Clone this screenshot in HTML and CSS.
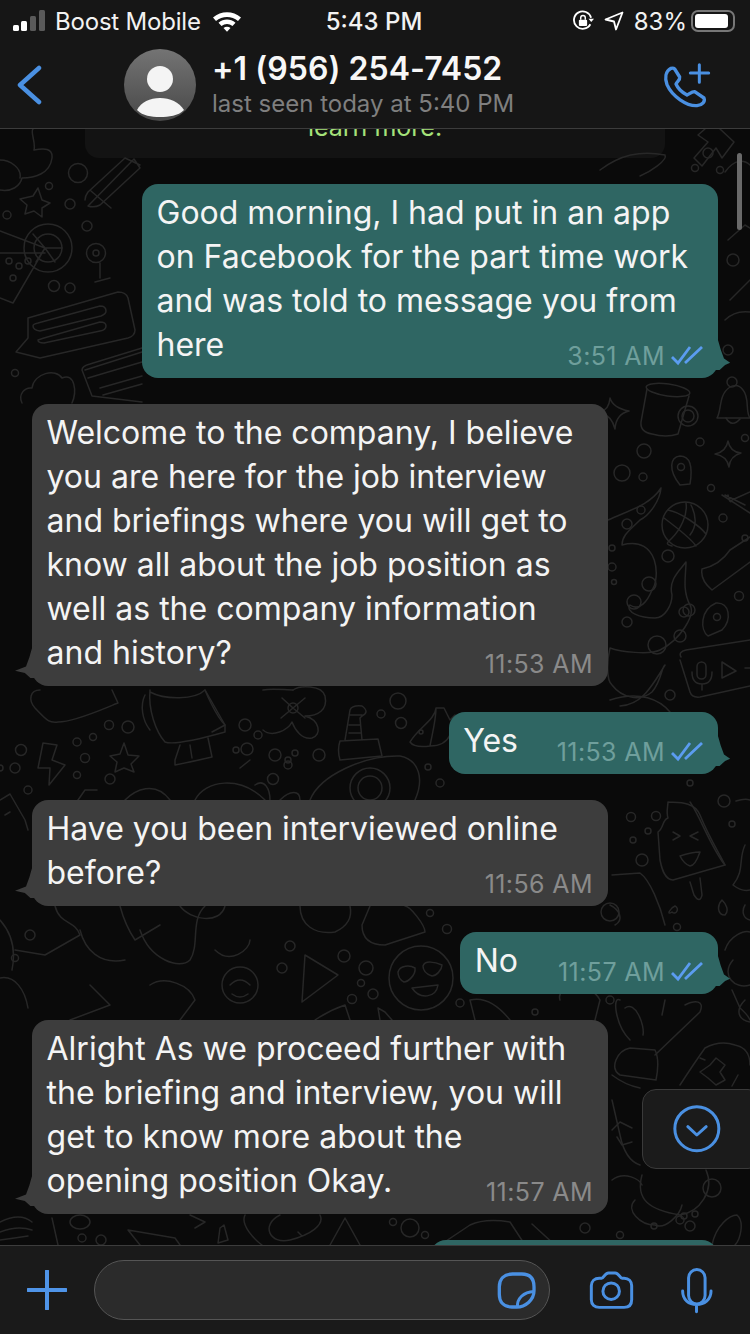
FILE: index.html
```html
<!DOCTYPE html>
<html lang="en">
<head>
<meta charset="utf-8">
<title>Chat</title>
<link rel="stylesheet" href="styles.css">
</head>
<body>
<div class="app">
  <header class="top">
    <div class="status">
      <div class="status-left">
        <svg class="signal" viewBox="0 0 34 22" width="34" height="22"><rect x="0" y="15" width="6" height="6" rx="1.5" fill="#fff"/><rect x="8" y="11" width="6" height="10" rx="1.5" fill="#fff"/><rect x="17" y="6" width="6" height="15" rx="1.5" fill="#5a5a5a"/><rect x="26" y="0" width="6" height="21" rx="1.5" fill="#5a5a5a"/></svg>
        <span class="carrier">Boost Mobile</span>
        <svg class="wifi" viewBox="0 0 30 22" width="30" height="22"><path d="M1 7.5C9 .5 21 .5 29 7.5L26 11C19.800 5.500 10.200 5.500 4 11Z" fill="#fff"/><path d="M6.500 12.800C11.500 8.500 18.500 8.500 23.500 12.800L20.500 16C17 13.300 13 13.300 9.500 16Z" fill="#fff"/><path d="M11.500 18C13.500 16.400 16.500 16.400 18.500 18L15 21.800Z" fill="#fff"/></svg>
      </div>
      <div class="clock">5:43 PM</div>
      <div class="status-right">
        <svg class="lock" viewBox="0 0 24 24" width="22" height="22"><path d="M20 15.500A9.500 9.500 0 1 1 20.800 8.500" fill="none" stroke="#fff" stroke-width="2"/><path d="M18 9.500h6l-3 3.500z" fill="#fff"/><rect x="7.500" y="10.500" width="9" height="7" rx="1.200" fill="#fff"/><path d="M9.500 10.500V8.500a2.500 2.500 0 0 1 5 0v2" fill="none" stroke="#fff" stroke-width="1.600"/></svg>
        <svg class="loc" viewBox="0 0 20 20" width="20" height="20"><path d="M18.500 1.500L1.500 8.500L10 10.500L12 18.500Z" fill="none" stroke="#fff" stroke-width="1.800" stroke-linejoin="round"/></svg>
        <span class="pct">83%</span>
        <span class="battery"><span class="battery-fill"></span></span>
      </div>
    </div>
    <div class="nav">
      <svg class="back" viewBox="0 0 26 40" width="26" height="40"><path d="M22 3L3 20L22 37" fill="none" stroke="#4a90e2" stroke-width="4.500" stroke-linecap="round" stroke-linejoin="round"/></svg>
      <div class="avatar">
        <svg viewBox="0 0 72 72" width="72" height="72"><circle cx="36" cy="30" r="13" fill="#f4f4f4"/><path d="M13 61C17 53 26 49 36 49S55 53 60 61C54 67 45 68 36 68S19 67 13 61Z" fill="#f4f4f4"/></svg>
      </div>
      <div class="who">
        <div class="name">+1 (956) 254-7452</div>
        <div class="seen">last seen today at 5:40 PM</div>
      </div>
      <svg class="call" viewBox="870 180 150 135" width="50" height="45"><path d="M897 196C880 205 878 225 885 245C900 280 945 310 975 308C992 306 1000 295 996 285L968 266C960 265 950 275 945 276C930 268 917 255 912 243C915 235 925 232 923 222L908 198C905 195 900 195 897 196Z" fill="none" stroke="#4a90e2" stroke-width="10" stroke-linejoin="round"/><path d="M982 185V238M955 210H1010" fill="none" stroke="#4a90e2" stroke-width="9" stroke-linecap="round"/></svg>
    </div>
  </header>

  <main class="chat">
    <svg class="doodles" viewBox="0 129 750 1116" width="750" height="1116" aria-hidden="true">
      <g fill="none" stroke="#272727" stroke-width="1.500" stroke-linejoin="round" stroke-linecap="round">
        <!-- top-left -->
        <path d="M0 190C12 192 20 186 22 178C34 178 50 174 52 158C53 148 44 148 34 150C36 142 30 132 33 129"/>
        <path d="M0 160C10 160 22 168 20 178"/>
        <path d="M33 196L38 188L42 200L50 203L42 208L42 217L34 211L25 214L27 205L20 199Z"/>
        <circle cx="78" cy="173" r="9.500"/><circle cx="70" cy="204" r="5"/><circle cx="7" cy="215" r="4"/><circle cx="87" cy="226" r="5"/><circle cx="49" cy="186" r="3.500"/>
        <path d="M88 206L134 159L140 168L100 205Q94 208 88 206ZM91 191L111 208M85 200Q85 196 88 192L125 158L140 165"/>
        <circle cx="48" cy="248" r="24"/><circle cx="48" cy="248" r="14"/>
        <path d="M0 231L45 248L13 303L0 298M0 253L45 253M45 248L62 248M45 248L33 234M45 248L55 262M45 248L36 262"/>
        <circle cx="9" cy="261" r="3"/><circle cx="19" cy="266" r="3"/><circle cx="28" cy="261" r="3"/><circle cx="13" cy="278" r="3"/>
        <circle cx="96" cy="253" r="9.500"/><circle cx="96" cy="253" r="3"/><path d="M100 263V278M95 282L110 278"/>
        <circle cx="54" cy="286" r="5.500"/><circle cx="70" cy="288" r="5"/>
        <path d="M28 318L118 292Q126 292 128 298L135 330Q135 336 128 338L40 358L16 352L28 338Z"/>
        <path d="M38 323L100 306Q106 306 106 311Q106 314 101 316L40 331Q33 330 33 326Q33 324 38 323ZM44 338L100 322Q106 322 106 326Q106 330 100 331L44 343Q38 343 38 340Z"/>
        <path d="M85 370L142 352M88 378L142 362M100 388L142 376M103 395L142 384"/>
        <path d="M82 370Q82 366 90 364L142 348M82 370L92 396L142 402"/>
        <circle cx="15" cy="373" r="3.500"/>
        <path d="M22 403C18 395 24 387 32 388C34 373 56 368 62 378C75 372 77 392 72 403"/>
        <!-- top-right -->
        <path d="M720 129L734 142L722 158L716 148L702 166L694 158L708 142L698 135L705 129"/>
        <circle cx="708" cy="153" r="5"/><circle cx="695" cy="168" r="3.500"/><circle cx="720" cy="170" r="3.500"/>
        <path d="M600 170C620 155 640 150 665 155C668 160 650 172 640 176"/>
        <path d="M725 172C735 158 745 160 750 165"/>
        <path d="M728 240L745 225L750 228M730 300L750 280M725 320Q735 310 750 312"/>
        <circle cx="733" cy="260" r="6"/><circle cx="728" cy="350" r="5"/>
        <!-- right column -->
        <ellipse cx="668" cy="390" rx="22" ry="6" transform="rotate(8 668 390)"/>
        <path d="M647 389L641 422Q640 432 652 434Q666 438 678 434L689 396"/>
        <circle cx="688" cy="416" r="10"/><circle cx="688" cy="416" r="6"/>
        <path d="M717 418C722 410 718 395 730 387Q738 383 743 390C750 398 745 412 750 418Z"/>
        <circle cx="732" cy="382" r="5"/><path d="M726 418Q732 428 740 419"/>
        <path d="M728 441Q730 452 741 453Q730 456 729 467Q727 456 715 454Q726 452 728 441Z"/>
        <path d="M610 398Q613 408 629 411Q616 414 615 429Q612 416 600 412Q609 410 610 398Z"/>
        <circle cx="644" cy="451" r="7"/><circle cx="622" cy="473" r="8"/><circle cx="643" cy="477" r="4"/><circle cx="700" cy="442" r="4"/><circle cx="711" cy="488" r="3.500"/><circle cx="723" cy="518" r="4"/><circle cx="668" cy="556" r="6"/><circle cx="739" cy="596" r="4.500"/><circle cx="745" cy="438" r="3.500"/><circle cx="670" cy="695" r="5"/>
        <path d="M680 485C668 470 670 457 680 456C690 456 693 466 690 484Z"/><circle cx="681" cy="467" r="3.500"/>
        <circle cx="685" cy="525" r="23"/>
        <path d="M664 518C680 530 692 540 696 546M668 510C680 512 700 526 706 534M686 503C688 515 680 530 672 538C668 542 664 544 672 546M691 505C696 515 698 525 690 535"/>
        <path d="M608 520C630 510 650 505 661 488C660 500 650 515 640 520C630 530 622 535 622 545C660 535 660 580 652 590C648 600 640 612 630 605C625 612 640 618 655 618C665 618 672 605 672 595C668 580 680 570 686 562C686 575 682 590 690 605C696 615 680 640 660 650C650 655 620 652 610 648C607 660 606 680 612 685C622 698 640 702 652 692C662 680 662 665 665 665C650 690 640 705 620 706"/>
        <circle cx="627" cy="524" r="5"/><circle cx="641" cy="510" r="4"/><circle cx="649" cy="584" r="7"/><circle cx="634" cy="602" r="7"/><circle cx="627" cy="622" r="5"/><circle cx="684" cy="612" r="5"/><circle cx="689" cy="610" r="6"/><circle cx="680" cy="636" r="6"/><circle cx="657" cy="645" r="9"/><circle cx="612" cy="548" r="3"/><circle cx="612" cy="567" r="4"/><circle cx="614" cy="582" r="2.500"/>
        <path d="M722 495L750 513M725 495L745 505M750 492L732 500Q730 505 728 495M702 569Q720 565 730 550L750 537M702 569Q700 580 712 590L750 562"/><circle cx="745" cy="538" r="3"/>
        <path d="M708 636C700 630 700 610 716 603C730 602 732 620 722 630Z"/><circle cx="717" cy="617" r="3.500"/>
        <path d="M681 657Q678 652 686 650L750 640M680 660L690 692Q692 698 700 697L750 686"/>
        <rect x="697" y="662" width="9" height="17" rx="4.500"/><path d="M692 672Q692 684 702 684Q712 684 712 672M702 684V690"/>
        <path d="M722 662L736 671L722 678Z"/><path d="M745 668H750"/>
        <!-- ice lolly -->
        <path d="M668 802C675 803 694 800 700 815C708 835 720 855 725 865C708 870 680 878 673 880C665 880 662 870 660 860L658 832C664 828 662 820 668 818C666 812 668 806 668 802Z"/>
        <path d="M690 802C698 812 712 850 725 865"/>
        <path d="M673 840L680 836L673 832M698 832L690 836L698 840M680 856Q692 852 700 852Q695 866 690 866Q684 864 680 856Z"/>
        <path d="M690 882L694 895Q700 904 702 895L700 878"/>
        <path d="M675 906C670 908 666 916 672 912C676 916 680 908 675 906ZM722 900C717 905 717 915 725 915C730 910 725 903 722 900ZM745 905C742 910 742 918 750 920"/>
        <circle cx="631" cy="817" r="4.500"/><circle cx="656" cy="816" r="4.500"/><circle cx="648" cy="831" r="3"/><circle cx="633" cy="840" r="3"/><circle cx="642" cy="860" r="6"/><circle cx="724" cy="801" r="6"/><circle cx="690" cy="783" r="3"/><circle cx="732" cy="824" r="3"/>
        <path d="M736 801Q745 798 750 800M745 845C738 860 745 870 733 885Q742 892 750 890"/>
        <path d="M612 875L640 873C650 880 660 905 665 925M610 905C620 910 624 920 615 925"/>
        <circle cx="610" cy="912" r="9"/><circle cx="677" cy="927" r="3.500"/>
        <path d="M725 950C730 935 745 930 750 932M733 960C720 975 735 990 750 985"/>
        <path d="M732 990L740 1008Q748 1015 750 1020M745 1000C735 1010 738 1020 750 1022"/>
        <path d="M620 1000C612 995 615 1025 630 1040M616 1060Q620 1050 630 1048L655 1050Q660 1060 656 1080L620 1075Q612 1070 616 1060Z"/>
        <path d="M625 1008C635 1000 645 1025 643 1035M665 1000L662 1015M685 1005C695 1000 705 1000 700 1012L655 1055"/>
        <path d="M705 1048Q720 1040 735 1045Q750 1048 750 1065M680 1085Q695 1062 705 1048"/>
        <path d="M700 1058L705 1060M710 1065L716 1058L725 1065L720 1072L725 1080L716 1085L708 1078L700 1072Z"/>
        <path d="M738 1075L732 1086"/>
        <!-- lower right -->
        <path d="M612 1075Q625 1085 640 1088M612 1100L620 1135Q625 1160 640 1165M612 1180C625 1170 640 1180 642 1185M635 1200C625 1210 640 1225 655 1225C665 1230 680 1215 682 1205"/>
        <path d="M642 1175C635 1200 650 1210 680 1215C700 1212 715 1190 706 1170"/>
        <circle cx="712" cy="1188" r="9"/><circle cx="680" cy="1220" r="4"/><circle cx="690" cy="1226" r="5"/><circle cx="684" cy="1216" r="3"/><circle cx="654" cy="1226" r="3"/><circle cx="695" cy="1214" r="3"/>
        <path d="M712 1245C716 1225 730 1215 737 1215C745 1222 740 1240 735 1245"/>
        <path d="M612 1130L620 1122L632 1128M617 1137L622 1145L632 1142"/>
        <path d="M532 1224L555 1245M440 1245L470 1225Q485 1218 510 1222L525 1245"/>
        <circle cx="410" cy="1228" r="9"/><circle cx="425" cy="1235" r="3.500"/><circle cx="393" cy="1222" r="3.500"/><circle cx="585" cy="1228" r="5"/><circle cx="620" cy="1235" r="3.500"/>
        <!-- bottom strip left -->
        <path d="M0 1222Q20 1212 32 1222M0 1232Q18 1225 32 1230M0 1240Q15 1238 28 1236M52 1218L58 1245"/>
        <ellipse cx="80" cy="1222" rx="10" ry="7"/><circle cx="82" cy="1238" r="4"/><circle cx="101" cy="1240" r="5"/>
        <path d="M128 1230L175 1238L180 1245M128 1230L140 1245M190 1215L205 1222L195 1228M220 1228L218 1243L228 1240L224 1225ZM245 1215C240 1225 255 1240 262 1245M280 1215C260 1225 270 1245 290 1240C310 1235 325 1225 320 1215M298 1232L302 1236M330 1245L345 1218L360 1245"/>
        <!-- flower, periscope, middle row -->
        <circle cx="293" cy="708" r="5"/><path d="M293 690C300 685 322 685 325 696C328 710 318 716 305 716C320 720 322 735 312 738C302 740 295 730 292 722C288 730 272 738 263 730M293 708L305 698M293 708L282 698M293 708L305 718M293 708L281 718"/>
        <path d="M263 690C272 688 285 690 293 690"/>
        <circle cx="245" cy="725" r="6"/><circle cx="258" cy="735" r="4"/>
        <circle cx="295" cy="753" r="3"/>
        <circle cx="319" cy="755" r="6"/><circle cx="288" cy="760" r="3"/>
        <path d="M345 740L350 710Q352 705 362 706Q370 712 362 716L360 718L362 740M350 715L362 715M349 725L360 725M349 733L361 733M340 741L378 739L382 756L340 760Q337 750 340 741Z"/>
        <path d="M310 800C320 775 365 755 400 756C420 760 424 780 415 800"/>
        <circle cx="370" cy="788" r="20"/><circle cx="370" cy="788" r="12"/>
        <circle cx="398" cy="701" r="8"/><circle cx="381" cy="714" r="4"/><circle cx="401" cy="723" r="5.500"/><circle cx="428" cy="767" r="3"/><circle cx="440" cy="783" r="4"/>
        <path d="M410 742C418 728 435 720 436 708L444 708L450 720L455 715M410 742Q414 748 430 746Q445 746 450 735M436 708C436 720 432 735 430 746"/><circle cx="421" cy="732" r="2"/>
        <path d="M280 800C290 790 300 790 300 800M255 785C265 778 270 790 270 800M240 768L250 760"/>
        <!-- robot area -->
        <path d="M40 690C30 690 28 700 35 708C48 722 50 723 58 722C75 722 105 708 118 703L112 690"/>
        <path d="M150 690C148 710 156 732 165 742Q175 746 225 732L225 725C215 715 205 690 205 690M150 692C165 700 195 700 205 690"/>
        <path d="M145 695C140 705 142 720 150 730"/>
        <path d="M180 745L175 760L175 765Q190 762 212 757L208 738M190 745L192 758"/>
        <path d="M205 690L225 725L212 732"/>
        <circle cx="109" cy="725" r="4.500"/><circle cx="128" cy="727" r="6"/><circle cx="93" cy="737" r="3.500"/><circle cx="77" cy="742" r="4"/><circle cx="21" cy="750" r="5.500"/><circle cx="85" cy="758" r="4.500"/><circle cx="15" cy="768" r="5"/><circle cx="77" cy="775" r="3.500"/><circle cx="110" cy="779" r="5"/><circle cx="28" cy="790" r="4"/><circle cx="0" cy="768" r="3"/><circle cx="247" cy="749" r="6"/><circle cx="275" cy="755" r="6"/><circle cx="236" cy="750" r="3"/><circle cx="273" cy="779" r="5.500"/><circle cx="288" cy="765" r="4"/>
        <path d="M124 743L128 755L139 756L131 764L134 772L124 768L115 772L117 762L110 756L120 754Z"/>
        <path d="M43 743L57 745L52 760L65 765L49 785L50 768L38 768Z"/>
        <path d="M0 800L10 794L25 820L28 830M5 815L10 812"/>
        <path d="M78 800L85 790L97 790M125 800C135 790 155 780 170 800M195 800C205 780 240 775 265 800"/>
        <!-- lower band -->
        <path d="M55 906C60 925 75 920 80 935L45 955L15 950M120 906Q125 925 135 940L160 925M180 906C190 920 220 925 225 906"/>
        <circle cx="30" cy="935" r="5"/><circle cx="15" cy="958" r="3.500"/>
        <path d="M0 920Q18 940 12 970M0 978C15 975 25 990 28 1008"/>
        <path d="M300 906C300 925 315 935 335 932C350 925 352 915 350 906M370 906L362 925Q362 945 385 945L425 932C425 925 410 906 405 906"/>
        <circle cx="430" cy="913" r="3.500"/><circle cx="447" cy="929" r="4.500"/><circle cx="290" cy="946" r="5"/><circle cx="344" cy="956" r="6"/><circle cx="366" cy="968" r="7"/><circle cx="361" cy="983" r="3.500"/><circle cx="373" cy="994" r="5"/><circle cx="352" cy="999" r="4.500"/><circle cx="282" cy="968" r="5"/>
        <path d="M305 955L338 975L302 1002Z"/>
        <circle cx="421" cy="978" r="32"/>
        <path d="M398 972C400 965 410 965 415 968C416 975 408 982 404 982C400 980 398 976 398 972ZM423 966C425 960 435 962 442 965C442 970 436 976 432 976C426 974 423 970 423 966ZM412 988L438 985C436 998 420 1000 412 988Z"/>
        <path d="M315 1020Q330 1010 345 1005L350 1020M380 1020L378 1008L385 1012L392 1020"/>
        <path d="M80 930C85 950 100 965 125 960M140 930C150 960 180 970 190 960C200 945 190 920 205 906M215 950C230 965 250 950 250 940M150 985C165 975 190 985 195 1000L180 1020M90 985L110 1005L70 1020"/>
        <circle cx="240" cy="985" r="18"/><path d="M230 985Q240 975 250 985M232 994Q240 1000 248 994"/>
        <path d="M475 1020L470 1000Q490 995 510 1020M560 1000C555 985 590 980 600 1000L595 1020"/>
        <circle cx="460" cy="1003" r="4"/><circle cx="610" cy="1000" r="4"/><circle cx="535" cy="1012" r="3"/>
        <path d="M610 700C640 690 660 700 670 712"/>
      </g>
    </svg>

    <div class="notice">learn more.</div>

    <div class="row out">
      <div class="bubble out-b">Good morning, I had put in an app<br>on Facebook for the part time work<br>and was told to message you from<br>here
        <span class="meta out-meta">3:51 AM<svg class="ticks" viewBox="0 0 32 20" width="32" height="20"><path d="M1 11L7 17L19 1M14 17L31 1" fill="none" stroke="#5b9cf0" stroke-width="2.800"/></svg></span>
      </div>
    </div>
    <div class="row in">
      <div class="bubble in-b">Welcome to the company, I believe<br>you are here for the job interview<br>and briefings where you will get to<br>know all about the job position as<br>well as the company information<br>and history?
        <span class="meta in-meta">11:53 AM</span>
      </div>
    </div>
    <div class="row out">
      <div class="bubble out-b short">Yes
        <span class="meta out-meta">11:53 AM<svg class="ticks" viewBox="0 0 32 20" width="32" height="20"><path d="M1 11L7 17L19 1M14 17L31 1" fill="none" stroke="#5b9cf0" stroke-width="2.800"/></svg></span>
      </div>
    </div>
    <div class="row in">
      <div class="bubble in-b">Have you been interviewed online<br>before?
        <span class="meta in-meta">11:56 AM</span>
      </div>
    </div>
    <div class="row out">
      <div class="bubble out-b short">No
        <span class="meta out-meta">11:57 AM<svg class="ticks" viewBox="0 0 32 20" width="32" height="20"><path d="M1 11L7 17L19 1M14 17L31 1" fill="none" stroke="#5b9cf0" stroke-width="2.800"/></svg></span>
      </div>
    </div>
    <div class="row in">
      <div class="bubble in-b">Alright As we proceed further with<br>the briefing and interview, you will<br>get to know more about the<br>opening position Okay.
        <span class="meta in-meta">11:57 AM</span>
      </div>
    </div>
    <div class="row out">
      <div class="bubble out-b peek"></div>
    </div>

    <div class="scroll-thumb"></div>
    <div class="jump">
      <svg viewBox="885 135 155 150" width="52" height="50"><circle cx="962" cy="209" r="66" fill="none" stroke="#4a90e2" stroke-width="9"/><path d="M935 203L962 228L990 203" fill="none" stroke="#4a90e2" stroke-width="9" stroke-linecap="round" stroke-linejoin="round"/></svg>
    </div>
  </main>

  <footer class="composer">
    <svg class="plus" viewBox="0 0 40 40" width="40" height="40"><path d="M20 1V39M1 20H39" fill="none" stroke="#4f94e8" stroke-width="4" stroke-linecap="round"/></svg>
    <div class="input">
      <svg class="sticker" viewBox="365 632 118 118" width="39" height="39"><path d="M412 641H440C465 641 477 655 477 680V692C477 720 450 741 425 741H410C385 741 372 725 372 703V680C372 655 387 641 412 641Z" fill="none" stroke="#4a90e2" stroke-width="10"/><path d="M427 741C425 715 445 696 477 694" fill="none" stroke="#4a90e2" stroke-width="9"/></svg>
    </div>
    <svg class="camera" viewBox="640 628 142 124" width="47" height="41"><path d="M674 653H681C688 653 690 637 702 637H722C734 637 736 653 743 653H749C763 653 772 662 772 676V718C772 733 763 741 749 741H674C660 741 650 733 650 718V676C650 662 660 653 674 653Z" fill="none" stroke="#4a90e2" stroke-width="9"/><circle cx="710" cy="692" r="25" fill="none" stroke="#4a90e2" stroke-width="9"/></svg>
    <svg class="mic" viewBox="915 620 106 144" width="35" height="48"><rect x="944" y="630" width="50" height="104" rx="25" fill="none" stroke="#4a90e2" stroke-width="9"/><path d="M926 695C926 722 945 736 968 736C991 736 1012 722 1012 695M968 736V758" fill="none" stroke="#4a90e2" stroke-width="9" stroke-linecap="round"/></svg>
  </footer>
</div>
</body>
</html>
```
FILE: styles.css
```css
* { box-sizing: border-box; }
html, body { margin: 0; padding: 0; background: #0a0a0a; }
body { font-family: Inter, "Noto Sans", sans-serif; color: #f4f4f4; }
.app { width: 750px; height: 1334px; display: flex; flex-direction: column; overflow: hidden; }

.top { height: 129px; flex: none; background: #161616; border-bottom: 1px solid #3c3c3c; position: relative; z-index: 2; }
.status { height: 42px; display: grid; grid-template-columns: 1fr auto 1fr; align-items: center; padding: 0 15px 0 13px; font-size: 24px; color: #f2f2f2; }
.status-left { display: flex; align-items: center; gap: 8px; }
.carrier { margin-right: 3px; letter-spacing: -0.200px; }
.clock { font-weight: 500; }
.status-right { display: flex; align-items: center; justify-content: flex-end; gap: 10px; }
.pct { margin-right: -4px; }
.battery { width: 44px; height: 22px; border: 2px solid #777; border-radius: 7px; padding: 2px; display: flex; position: relative; margin-left: -2px; }
.battery-fill { width: 33px; background: #fff; border-radius: 3px; }

.nav { height: 86px; display: flex; align-items: center; padding: 0 38px 0 17px; }
.back { flex: none; }
.avatar { width: 72px; height: 72px; border-radius: 50%; background: linear-gradient(#747474, #484848); margin-left: 81px; flex: none; overflow: hidden; }
.avatar svg { display: block; }
.who { margin-left: 16px; flex: 1; padding-bottom: 3px; }
.name { font-size: 32px; font-weight: 600; line-height: 40px; letter-spacing: 0.050px; color: #f7f7f7; }
.seen { font-size: 24px; line-height: 30px; color: #7f7f7f; letter-spacing: 0; }
.call { flex: none; }

.chat { flex: 1; min-height: 0; position: relative; overflow: hidden; background: #0a0a0a; display: flex; flex-direction: column; }
.doodles { position: absolute; left: 0; top: 0; display: block; }
.notice { position: relative; width: 580px; height: 49px; margin: -20px 0 0 85px; padding-top: 3px; background: rgba(44, 44, 44, 0.28); border-radius: 14px; color: #a5e27a; font-size: 25px; line-height: 30px; text-align: center; flex: none; }

.row { position: relative; display: flex; margin-top: 26px; flex: none; }
.row.out { justify-content: flex-end; padding-right: 32px; }
.row.in { padding-left: 32px; }
.bubble { position: relative; width: 576px; padding: 7px 15px 11px 14.500px; border-radius: 16px; font-size: 32px; line-height: 44px; color: #f4f4f4; white-space: nowrap; }
.out-b { background: #2f6663; }
.in-b { background: #3d3d3d; }
.bubble.short { width: auto; padding-right: 200px; }
.bubble.peek { width: 288px; height: 62px; padding: 0; }
.peek::after { display: none; }

.out-b::after, .in-b::after { content: ""; position: absolute; bottom: 8px; width: 22px; height: 34px; }
.out-b::after { right: -17px; background: #2f6663; clip-path: polygon(0 0, 22% 10%, 35% 40%, 50% 66%, 78% 79%, 55% 85%, 30% 100%, 0 100%); }
.in-b::after { left: -17px; background: #3d3d3d; clip-path: polygon(100% 0, 78% 10%, 65% 40%, 50% 66%, 0 79%, 45% 85%, 70% 100%, 100% 100%); }

.meta { position: absolute; right: 15px; bottom: 7px; display: flex; align-items: center; gap: 6px; font-size: 25px; line-height: 30px; letter-spacing: 0.400px; }
.in-meta { color: #8a8a8a; }
.out-meta { color: #6f9f9c; }
.ticks { display: block; }

.scroll-thumb { position: absolute; left: 737px; top: 24px; width: 5px; height: 77px; border-radius: 3px; background: #6a6a6a; }
.jump { position: absolute; left: 642px; top: 960px; width: 120px; height: 80px; padding-left: 28px; display: flex; align-items: center; background: #1b1b1b; border: 1px solid #3a3a3a; border-radius: 14px; }

.composer { height: 89px; flex: none; background: #1a1a1a; border-top: 1px solid #3c3c3c; display: flex; align-items: center; padding: 0 33px 0 27px; position: relative; z-index: 2; }
.plus { flex: none; }
.input { width: 456px; height: 60px; margin-left: 27px; border: 1px solid #555; border-radius: 30px; background: #2b2b2b; display: flex; align-items: center; justify-content: flex-end; padding-right: 13px; flex: none; }
.camera { flex: none; margin-left: 38px; }
.mic { flex: none; margin-left: 44px; }
```
